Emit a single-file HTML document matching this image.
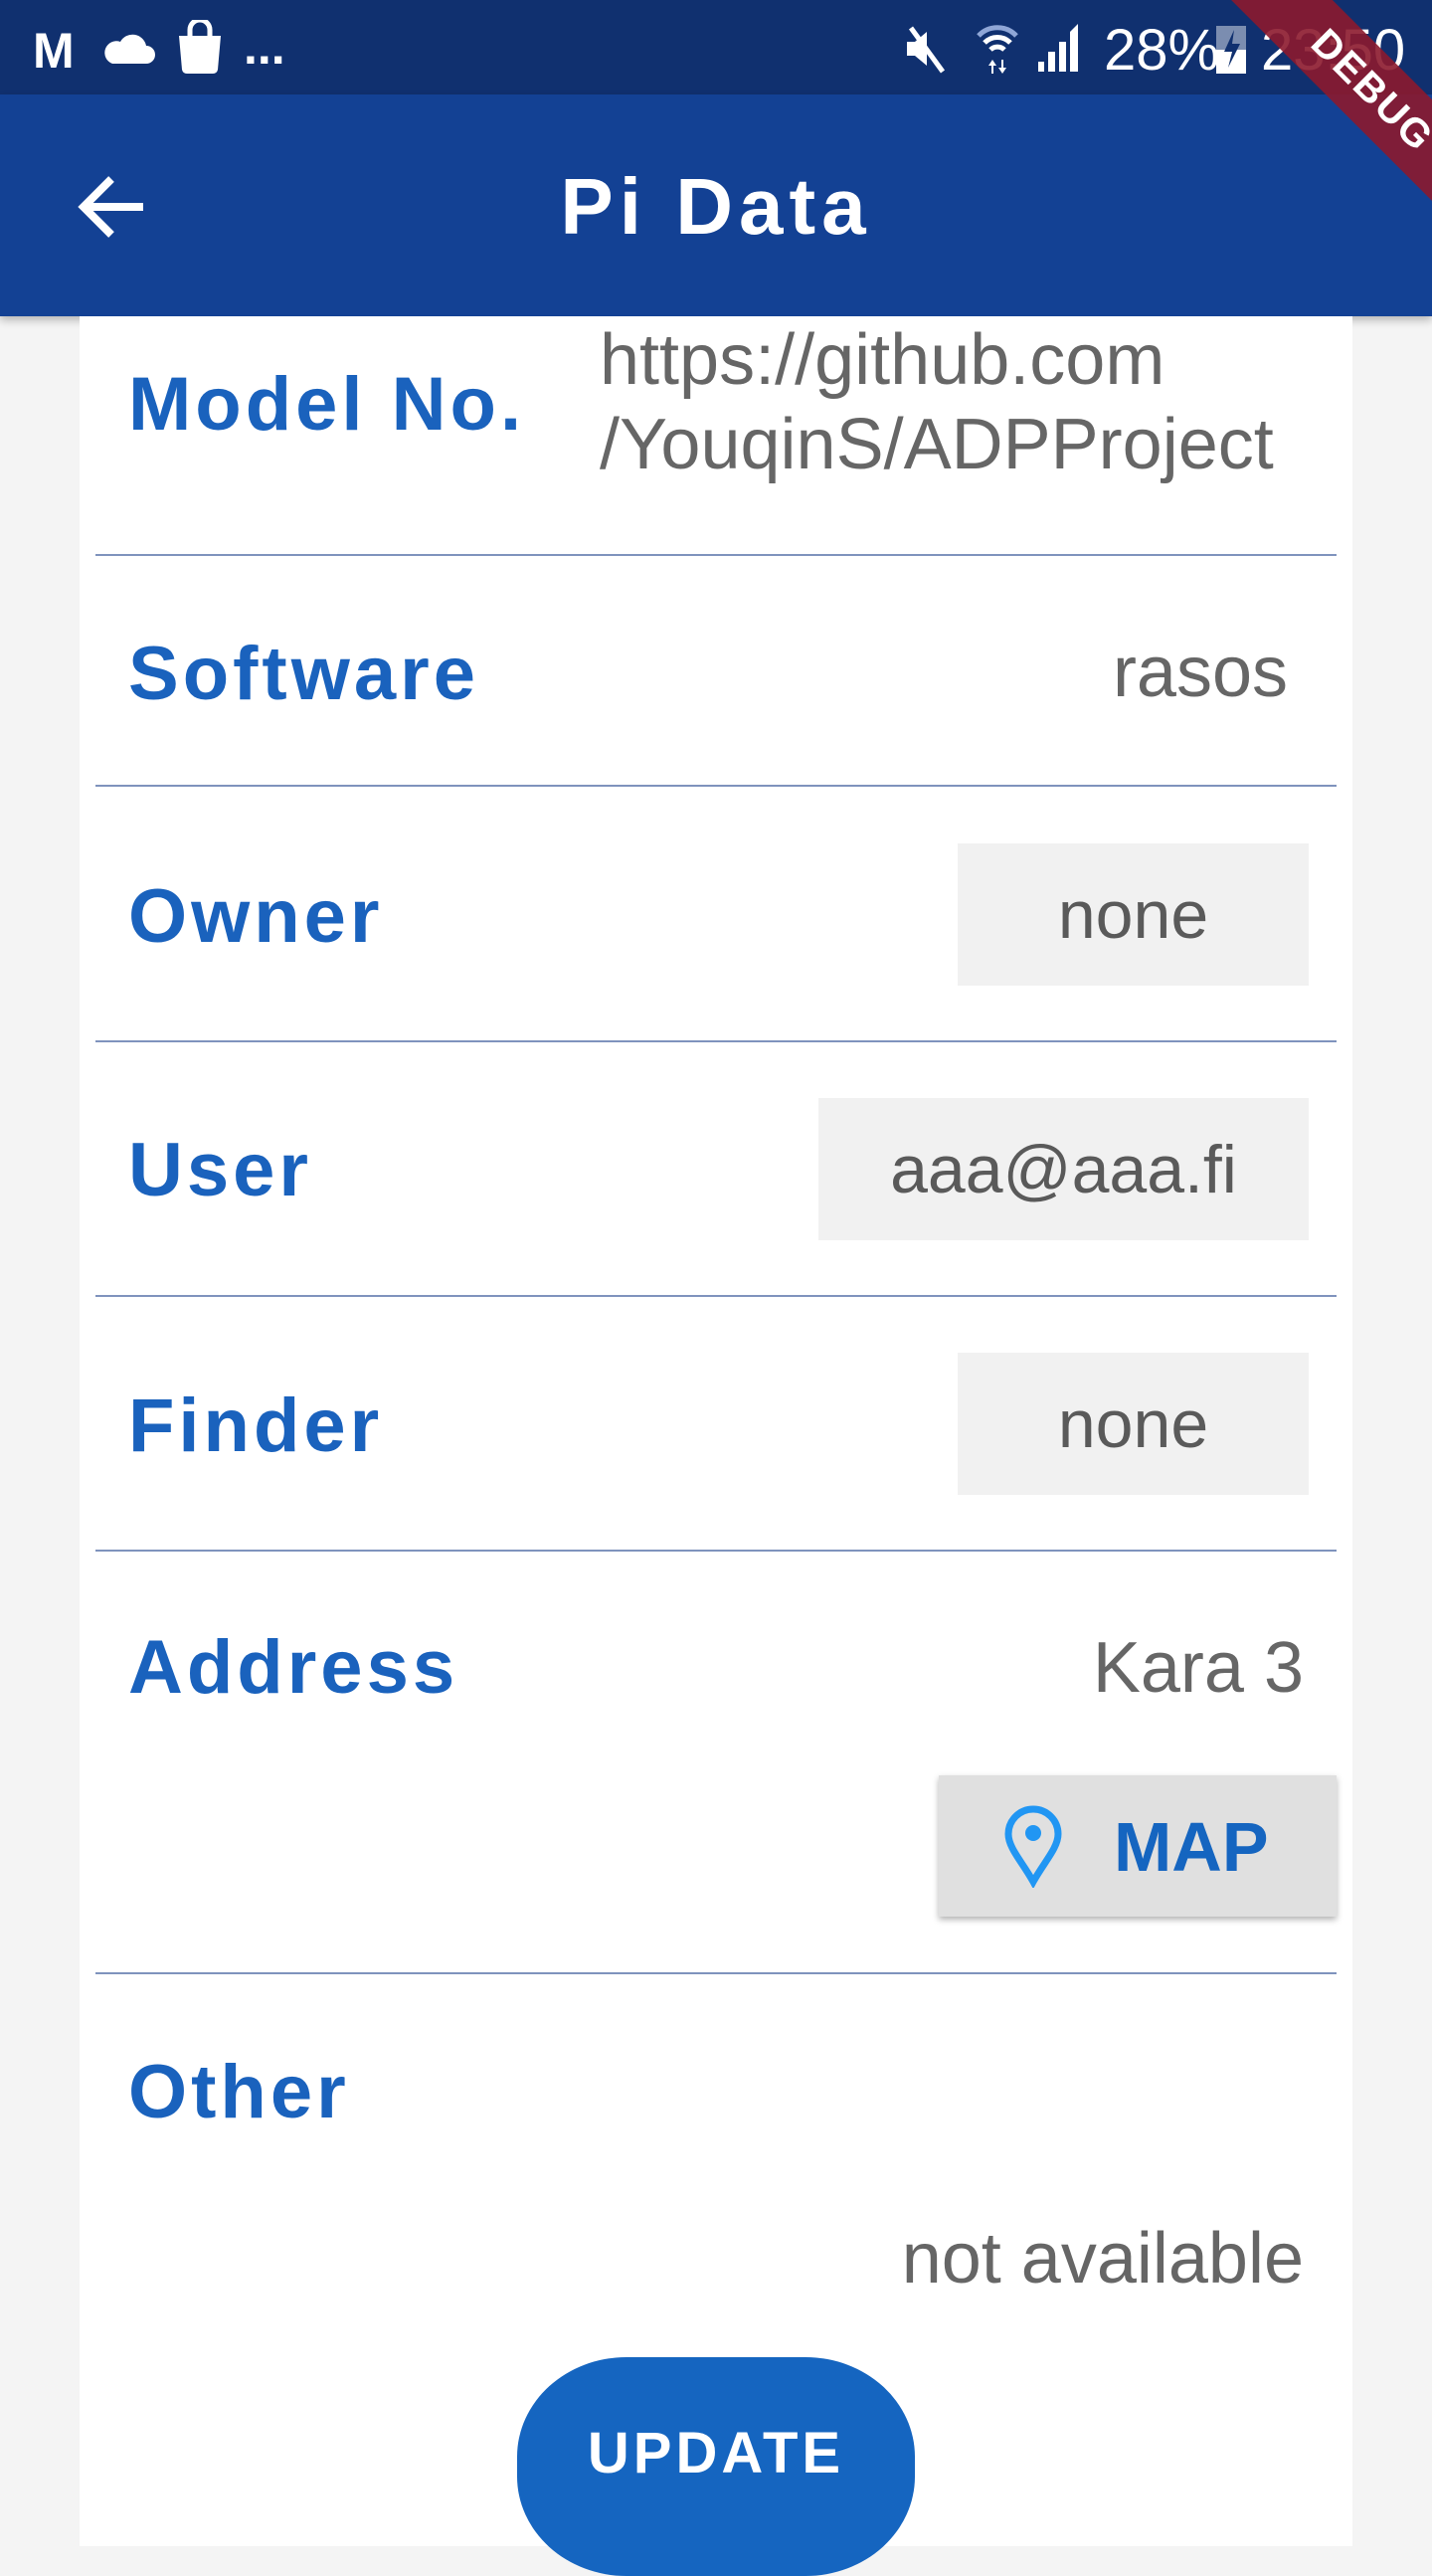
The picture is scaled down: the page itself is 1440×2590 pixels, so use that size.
<!DOCTYPE html>
<html><head><meta charset="utf-8"><style>
*{margin:0;padding:0;box-sizing:border-box}
body{width:1440px;height:2560px;overflow:hidden;background:#f4f4f4;font-family:"Liberation Sans",Roboto,sans-serif;position:relative}
.a{position:absolute}
.sb{left:0;top:0;width:1440px;height:95px;background:#10306f}
.ab{left:0;top:95px;width:1440px;height:223px;background:#134194;box-shadow:0 4px 8px rgba(0,0,0,.25)}
.card{left:80px;top:318px;width:1280px;height:2242px;background:#fff}
.lbl{left:129px;font-size:76px;font-weight:bold;color:#1a62bd;letter-spacing:4px;line-height:1;transform:translateY(-50%)}
.val{right:145px;font-size:72px;color:#666;line-height:1;transform:translateY(-50%);text-align:right}
.line{left:96px;width:1248px;height:2px;background:#7f93bd}
.chip{background:#f1f1f1;color:#5a5a5a;font-size:68px;display:flex;align-items:center;justify-content:center}
.st{color:#fff;font-size:58px;line-height:1}
</style></head><body>
<div class="a sb"></div>
<div class="a ab"></div>
<!-- status icons -->
<div class="a st" style="left:33px;top:26px;font-size:50px;font-weight:bold">M</div>
<svg class="a" style="left:103px;top:30px" width="54" height="36" viewBox="0 0 54 36"><path d="M10 34h34a9 9 0 0 0 0-18 14 14 0 0 0-26-4 11 11 0 0 0-8 22z" fill="#fff"/></svg>
<svg class="a" style="left:176px;top:20px" width="50" height="54" viewBox="0 0 50 54"><path d="M15 16v-6a10 10 0 0 1 20 0v6" stroke="#fff" stroke-width="5" fill="none"/><path d="M4 16h42l-3 34q-1 4-5 4H12q-4 0-5-4z" fill="#fff"/></svg>
<div class="a st" style="left:245px;top:22px;font-size:50px;font-weight:bold">...</div>
<svg class="a" style="left:906px;top:24px" width="50" height="50" viewBox="0 0 50 50"><path d="M6 18h8l12-10v34L14 32H6z" fill="#fff"/><path d="M10 4l32 44" stroke="#fff" stroke-width="5"/></svg>
<svg class="a" style="left:980px;top:22px" width="46" height="52" viewBox="0 0 46 52"><path d="M4 14a26 26 0 0 1 38 0" stroke="#8fa6d6" stroke-width="5" fill="none"/><path d="M10 21a18 18 0 0 1 26 0M16 28a10 10 0 0 1 14 0" stroke="#fff" stroke-width="5" fill="none"/><path d="M18 38l-4 6h3v8h2v-8h3zM28 52l4-6h-3v-8h-2v8h-3z" fill="#fff"/></svg>
<svg class="a" style="left:1042px;top:22px" width="48" height="50" viewBox="0 0 48 50"><path d="M2 50h6v-10h-6zM12 50h7v-20h-7zM23 50h7v-30h-7zM34 50h8V2l-8 8z" fill="#fff"/></svg>
<div class="a st" style="left:1110px;top:22px">28%</div>
<svg class="a" style="left:1221px;top:22px" width="34" height="52" viewBox="0 0 34 52"><rect x="2" y="4" width="30" height="48" fill="#fff" opacity=".45"/><rect x="2" y="28" width="30" height="24" fill="#fff"/><path d="M20 8l-10 22h8l-4 16 12-24h-8z" fill="#10306f"/></svg>
<div class="a st" style="left:1268px;top:22px">23:50</div>
<!-- app bar -->
<svg class="a" style="left:76px;top:174px" width="72" height="68" viewBox="0 0 72 68"><path d="M68 34H10M36 6L8 34l28 28" stroke="#fff" stroke-width="8" fill="none"/></svg>
<div class="a" style="left:0;width:1440px;top:168px;text-align:center;color:#fff;font-size:80px;font-weight:bold;letter-spacing:6px;line-height:1">Pi Data</div>
<div class="a" style="left:1080px;top:55px;width:600px;height:72px;background:rgba(140,25,45,.9);transform:rotate(45deg);transform-origin:center;color:#fff;font-weight:bold;font-size:40px;text-align:center;line-height:72px;letter-spacing:2px">DEBUG</div>
<!-- card -->
<div class="a card"></div>
<div class="a lbl" style="top:407px">Model No.</div>
<div class="a" style="left:603px;top:320px;font-size:72px;color:#666;line-height:85px">https://github.com<br>/YouqinS/ADPProject</div>
<div class="a line" style="top:557px"></div>
<div class="a lbl" style="top:678px">Software</div>
<div class="a val" style="top:676px">rasos</div>
<div class="a line" style="top:789px"></div>
<div class="a lbl" style="top:922px">Owner</div>
<div class="a chip" style="left:963px;top:848px;width:353px;height:143px">none</div>
<div class="a line" style="top:1046px"></div>
<div class="a lbl" style="top:1177px">User</div>
<div class="a chip" style="left:823px;top:1104px;width:493px;height:143px">aaa@aaa.fi</div>
<div class="a line" style="top:1302px"></div>
<div class="a lbl" style="top:1434px">Finder</div>
<div class="a chip" style="left:963px;top:1360px;width:353px;height:143px">none</div>
<div class="a line" style="top:1558px"></div>
<div class="a lbl" style="top:1677px">Address</div>
<div class="a val" style="top:1677px;right:129px">Kara 3</div>
<div class="a" style="left:944px;top:1785px;width:400px;height:142px;background:#e0e0e0;box-shadow:0 3px 6px rgba(0,0,0,.3)"></div>
<svg class="a" style="left:1008px;top:1814px" width="62" height="84" viewBox="0 0 62 84"><path d="M31 78C20 58 6 44 6 30a25 25 0 0 1 50 0c0 14-14 28-25 48z" stroke="#2196f3" stroke-width="7" fill="none"/><circle cx="31" cy="29" r="8" fill="#2196f3"/></svg>
<div class="a" style="left:1120px;top:1822px;font-size:70px;font-weight:bold;color:#1565c0;line-height:1">MAP</div>
<div class="a line" style="top:1983px"></div>
<div class="a lbl" style="top:2104px">Other</div>
<div class="a val" style="top:2271px;right:129px">not available</div>
<div class="a" style="left:520px;top:2370px;width:400px;height:220px;border-radius:110px/100px;background:#1565c0"></div>
<div class="a" style="left:520px;width:400px;top:2438px;text-align:center;color:#fff;font-size:58px;font-weight:bold;letter-spacing:4px;line-height:1">UPDATE</div>
</body></html>
